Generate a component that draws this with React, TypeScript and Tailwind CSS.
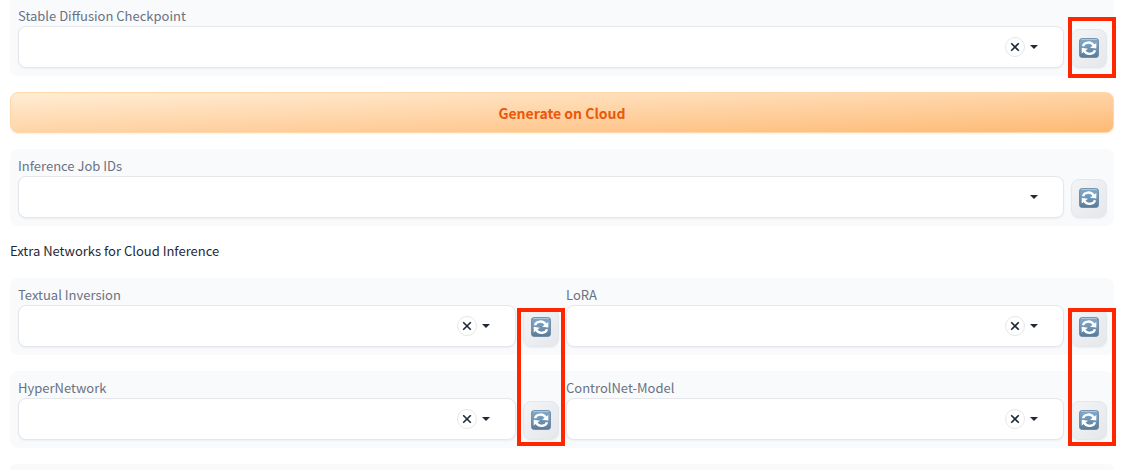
import { useId, useState } from "react";

function RefreshIcon() {
  return (
    <svg width="20" height="20" viewBox="0 0 20 20" aria-hidden="true">
      <defs>
        <linearGradient id="tile" x1="0" y1="0" x2="0" y2="1">
          <stop offset="0" stopColor="#7fa6c6" />
          <stop offset="0.25" stopColor="#7ba2c3" />
          <stop offset="0.6" stopColor="#6a8fb0" />
          <stop offset="1" stopColor="#587a98" />
        </linearGradient>
      </defs>
      <rect x="0.4" y="0.4" width="19.2" height="19.2" rx="3" fill="url(#tile)" stroke="#5d7f9d" strokeWidth="0.8" />
      <path d="M2.5 1.5H17.5" stroke="#a9c8e0" strokeWidth="1" strokeLinecap="round" />
      <g fill="none" stroke="#fff" strokeWidth="2.4">
        <path d="M4 8.2C5.2 3.9 12 3.1 14.8 7.6" />
        <path d="M16 12.2C14.8 16.5 8 17.3 5.2 12.8" />
      </g>
      <path d="M17.3 5V10.6L11 9.7Z" fill="#fff" />
      <path d="M2.7 15.4V9.8L9 10.7Z" fill="#fff" />
    </svg>
  );
}

function Highlight({ className }: { className: string }) {
  return (
    <div className={`pointer-events-none absolute z-10 w-12 border-4 border-[#ff2600] ${className}`} />
  );
}

type PickerProps = {
  label: string;
  clearable?: boolean;
  highlight?: string;
};

function Picker({ label, clearable = true, highlight }: PickerProps) {
  const id = useId();
  const [value, setValue] = useState("");
  return (
    <div className="flex min-w-0 flex-1 items-end gap-[7px]">
      <div className="min-w-0 flex-1">
        <label htmlFor={id} className="block h-[19px] text-[13px] leading-[18px] text-gray-500">
          {label}
        </label>
        <div className="flex h-[42px] items-center rounded-lg border border-gray-200 bg-white pr-[25px] shadow-xs">
          <input
            id={id}
            role="combobox"
            aria-expanded={false}
            value={value}
            onChange={(e) => setValue(e.target.value)}
            className="h-full min-w-0 flex-1 bg-transparent px-3 text-[13px] text-gray-800 outline-none"
          />
          {clearable && (
            <button
              type="button"
              aria-label={`Clear ${label}`}
              onClick={() => setValue("")}
              className="mr-[5px] flex size-5 items-center justify-center rounded-full border border-gray-200 bg-white"
            >
              <svg width="10" height="10" viewBox="0 0 10 10" aria-hidden="true">
                <path d="M1.2 1.2L8.8 8.8M8.8 1.2L1.2 8.8" stroke="#1f2937" strokeWidth="1.6" />
              </svg>
            </button>
          )}
          <svg width="8" height="4" viewBox="0 0 8 4" aria-hidden="true">
            <path d="M0 0H8L4 4Z" fill="#1f2937" />
          </svg>
        </div>
      </div>
      <div className="relative">
        <button
          type="button"
          aria-label={`Refresh ${label}`}
          className="flex h-[39px] w-9 justify-center rounded-lg border border-gray-200 bg-linear-to-br from-gray-100 to-gray-200 pt-2 shadow-xs"
        >
          <RefreshIcon />
        </button>
        {highlight && <Highlight className={highlight} />}
      </div>
    </div>
  );
}

export default function App() {
  return (
    <main className="flex flex-col gap-4 overflow-hidden bg-white pr-[9px] pl-2.5 font-['Noto_Sans_CJK_SC',sans-serif]">
      <section className="flex rounded-b-lg bg-[#f9fafc] pt-[7px] pr-[7px] pb-2 pl-2">
        <Picker label="Stable Diffusion Checkpoint" highlight="-left-[3px] -bottom-2.5 h-[61px]" />
      </section>

      <button
        type="button"
        className="h-[41px] rounded-lg border border-orange-200 bg-linear-to-br from-[#ffedd5] to-[#fdba74] text-sm leading-5 font-bold text-[#ea580c] shadow-xs"
      >
        Generate on Cloud
      </button>

      <section className="flex rounded-lg bg-[#f9fafc] pt-2 pr-[7px] pb-2 pl-2">
        <Picker label="Inference Job IDs" clearable={false} />
      </section>

      <h2 className="h-5 text-[13px] leading-[18px] text-gray-800">Extra Networks for Cloud Inference</h2>

      <section className="flex gap-[7px] rounded-lg bg-[#f9fafc] pt-2 pr-[7px] pb-2 pl-2">
        <Picker label="Textual Inversion" />
        <Picker label="LoRA" />
      </section>

      <section className="flex gap-[7px] rounded-lg bg-[#f9fafc] pt-2 pr-[7px] pb-2 pl-2">
        <Picker label="HyperNetwork" highlight="-left-1.5 -bottom-1.5 h-[138px]" />
        <Picker label="ControlNet-Model" highlight="-left-[3px] -bottom-1.5 h-[138px]" />
      </section>

      <section className="h-1.5 rounded-t-lg bg-[#f9fafc]" />
    </main>
  );
}
